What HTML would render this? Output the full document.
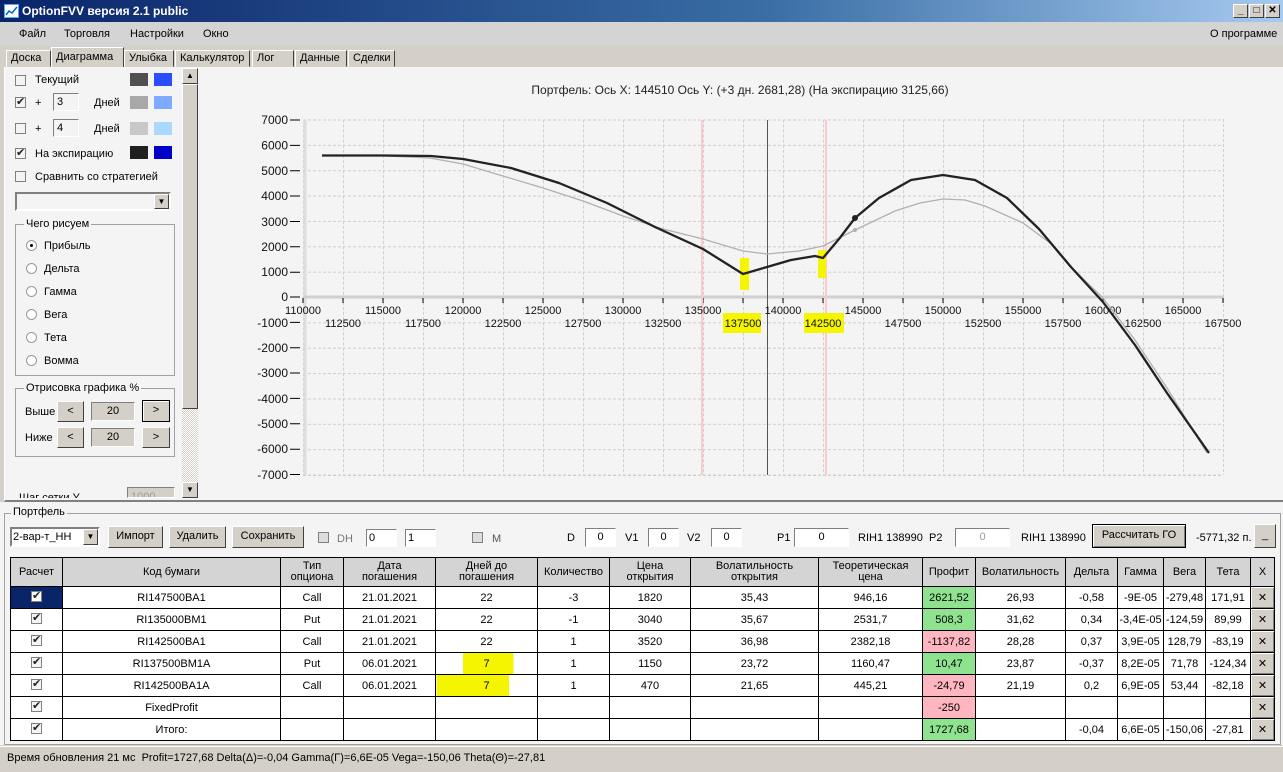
<!DOCTYPE html>
<html><head><meta charset="utf-8">
<style>
*{box-sizing:border-box;margin:0;padding:0}
body{width:1283px;height:772px;overflow:hidden;background:#d4d0c8;font-family:"Liberation Sans",sans-serif;font-size:11px;color:#000;position:relative}
.a{position:absolute}
.title{left:0;top:0;width:1283px;height:22px;background:linear-gradient(90deg,#0a246a 0%,#3a6ea5 60%,#a6caf0 100%);color:#fff;font-weight:bold;font-size:12px;line-height:22px;padding-left:22px}
.menu{left:0;top:22px;width:1283px;height:24px;background:#d4d4d4;font-size:11px}
.menu span{position:absolute;top:6px}
.tb{position:absolute;top:4px;width:15px;height:14px;background:#d4d0c8;border:1px solid;border-color:#fff #404040 #404040 #fff;color:#000;font-size:10px;line-height:11px;text-align:center;font-weight:bold}
.tab{position:absolute;top:50px;height:17px;background:#d4d0c8;border:1px solid;border-color:#fff #404040 #d4d0c8 #fff;font-size:11px;line-height:14px;padding:0 4px}
.cb{position:absolute;width:11px;height:11px;border:1px solid #808080;background:#f4f4f4}
.ck::after{content:"✔";position:absolute;left:0px;top:-3px;font-size:11px;color:#222}
.inp{position:absolute;border:1px solid;border-color:#808080 #fff #fff #808080;background:#f4f4f4}
.btn{position:absolute;background:#d4d0c8;border:1px solid;border-color:#fff #404040 #404040 #fff;text-align:center;font-size:11px}
.rad{position:absolute;width:11px;height:11px;border-radius:50%;border:1px solid #999;background:#fff}
.grp{position:absolute;border:1px solid #a0a0a0}
.grp b{position:absolute;top:-7px;left:8px;background:#f4f4f4;font-weight:normal;padding:0 2px}
table{position:absolute;left:10px;top:557px;border-collapse:collapse;table-layout:fixed;background:#fff;font-size:11px}
td{border:1px solid #000;height:22px;text-align:center;white-space:nowrap;overflow:hidden;padding:0}
tr.h td{background:#d4d4d4;height:29px;line-height:11px}
.g{background:#8fe38f}.p{background:#ffb6c1}
.x{background:#d4d0c8;border:1px solid #000;box-shadow:inset 1px 1px #fff,inset -1px -1px #808080}
</style></head><body>
<div class="a title">OptionFVV версия 2.1 public</div>
<div class="a" style="left:4px;top:4px;width:15px;height:14px;background:#fff;border:1px solid #5af"><svg width="13" height="12"><path d="M1 10L4 6L7 8L12 2" stroke="#06c" fill="none" stroke-width="1.5"/></svg></div>
<div class="tb" style="left:1233px">_</div><div class="tb" style="left:1249px">□</div><div class="tb" style="left:1266px;left:1265px">✕</div>
<div class="a menu"><span style="left:19px">Файл</span><span style="left:64px">Торговля</span><span style="left:130px">Настройки</span><span style="left:203px">Окно</span><span style="left:1210px">О программе</span></div>
<div class="a" style="left:0;top:46px;width:1283px;height:22px;background:#d4d0c8"></div>
<div class="tab" style="left:6px;width:45px">Доска</div>
<div class="tab" style="left:51px;top:47px;height:21px;width:73px;border-bottom:none;line-height:18px">Диаграмма</div>
<div class="tab" style="left:124px;width:50px">Улыбка</div>
<div class="tab" style="left:175px;width:75px">Калькулятор</div>
<div class="tab" style="left:252px;width:42px">Лог</div>
<div class="tab" style="left:295px;width:52px">Данные</div>
<div class="tab" style="left:348px;width:47px">Сделки</div>
<!-- main panel -->
<div class="a" style="left:4px;top:67px;width:1279px;height:435px;background:#f4f4f4;border-left:1px solid #fff;border-bottom:2px solid #808080"></div>
<!-- left options -->
<div class="cb" style="left:15px;top:75px"></div><div class="a" style="left:35px;top:74px">Текущий</div>
<div class="a" style="left:130px;top:73px;width:18px;height:13px;background:#505050"></div><div class="a" style="left:154px;top:73px;width:18px;height:13px;background:#2a4dff"></div>
<div class="cb ck" style="left:15px;top:97px"></div><div class="a" style="left:35px;top:97px">+</div><div class="inp" style="left:53px;top:93px;width:26px;height:18px;padding:2px 3px">3</div><div class="a" style="left:94px;top:97px">Дней</div>
<div class="a" style="left:130px;top:96px;width:18px;height:13px;background:#a8a8a8"></div><div class="a" style="left:154px;top:96px;width:18px;height:13px;background:#7eaaff"></div>
<div class="cb" style="left:15px;top:123px"></div><div class="a" style="left:35px;top:123px">+</div><div class="inp" style="left:53px;top:119px;width:26px;height:18px;padding:2px 3px">4</div><div class="a" style="left:94px;top:123px">Дней</div>
<div class="a" style="left:130px;top:122px;width:18px;height:13px;background:#c8c8c8"></div><div class="a" style="left:154px;top:122px;width:18px;height:13px;background:#aad8ff"></div>
<div class="cb ck" style="left:15px;top:148px"></div><div class="a" style="left:35px;top:148px">На экспирацию</div>
<div class="a" style="left:130px;top:146px;width:18px;height:13px;background:#202020"></div><div class="a" style="left:154px;top:146px;width:18px;height:13px;background:#0000c8"></div>
<div class="cb" style="left:15px;top:171px"></div><div class="a" style="left:35px;top:171px">Сравнить со стратегией</div>
<div class="inp" style="left:15px;top:192px;width:156px;height:19px;border:2px solid;border-color:#808080 #fff #fff #808080"><div class="btn" style="right:0;top:0;width:15px;height:15px;font-size:8px;line-height:13px">▼</div></div>
<div class="grp" style="left:15px;top:224px;width:160px;height:152px"><b>Чего рисуем</b></div>
<div class="rad" style="left:26px;top:240px"><div class="a" style="left:3px;top:3px;width:3px;height:3px;background:#000;border-radius:50%"></div></div><div class="a" style="left:44px;top:240px">Прибыль</div>
<div class="rad" style="left:26px;top:263px"></div><div class="a" style="left:44px;top:263px">Дельта</div>
<div class="rad" style="left:26px;top:286px"></div><div class="a" style="left:44px;top:286px">Гамма</div>
<div class="rad" style="left:26px;top:309px"></div><div class="a" style="left:44px;top:309px">Вега</div>
<div class="rad" style="left:26px;top:332px"></div><div class="a" style="left:44px;top:332px">Тета</div>
<div class="rad" style="left:26px;top:355px"></div><div class="a" style="left:44px;top:355px">Вомма</div>
<div class="grp" style="left:15px;top:388px;width:160px;height:69px"><b>Отрисовка графика %</b></div>
<div class="a" style="left:25px;top:406px">Выше</div>
<div class="btn" style="left:57px;top:401px;width:27px;height:21px;line-height:18px">&lt;</div>
<div class="inp" style="left:91px;top:402px;width:44px;height:19px;background:#d4d0c8;text-align:center;line-height:16px">20</div>
<div class="btn" style="left:142px;top:400px;width:28px;height:22px;line-height:19px;border:1px solid #000;box-shadow:inset 1px 1px #fff">&gt;</div>
<div class="a" style="left:25px;top:432px">Ниже</div>
<div class="btn" style="left:57px;top:427px;width:27px;height:21px;line-height:18px">&lt;</div>
<div class="inp" style="left:91px;top:428px;width:44px;height:19px;background:#d4d0c8;text-align:center;line-height:16px">20</div>
<div class="btn" style="left:142px;top:427px;width:28px;height:21px;line-height:18px">&gt;</div>
<div class="a" style="left:19px;top:489px;height:9px;overflow:hidden;line-height:18px">Шаг сетки Y</div>
<div class="inp" style="left:127px;top:487px;width:48px;height:11px;background:#d4d0c8;color:#999;overflow:hidden;line-height:18px;padding-left:3px">1000</div>
<!-- scrollbar -->
<div class="a" style="left:182px;top:68px;width:16px;height:430px;background:repeating-conic-gradient(#d4d0c8 0 25%,#fff 0 50%) 0 0/2px 2px"></div>
<div class="btn" style="left:182px;top:68px;width:16px;height:16px;font-size:8px;line-height:14px">▲</div>
<div class="btn" style="left:182px;top:84px;width:16px;height:325px"></div>
<div class="btn" style="left:182px;top:482px;width:16px;height:16px;font-size:8px;line-height:14px">▼</div>
<!-- chart -->
<svg class="a" style="left:0;top:0" width="1283" height="500" font-family="Liberation Sans,sans-serif" font-size="11">
<defs><pattern id="gr" patternUnits="userSpaceOnUse" x="303" y="119.5" width="40" height="25.36"><path d="M0 0.5H40M0.5 0V25.36" stroke="#cfcfcf" stroke-dasharray="3 2" fill="none"/></pattern></defs>
<rect x="303" y="119.5" width="920" height="355.5" fill="url(#gr)"/>
<line x1="1223.5" y1="119" x2="1223.5" y2="475" stroke="#cfcfcf" stroke-dasharray="3 2"/>
<line x1="303" y1="475.5" x2="1223" y2="475.5" stroke="#cfcfcf" stroke-dasharray="3 2"/>
<text x="740" y="94" text-anchor="middle" font-size="12" fill="#222">Портфель: Ось X: 144510 Ось Y:  (+3 дн. 2681,28)  (На экспирацию 3125,66)</text>
<line x1="305" y1="120" x2="305" y2="475" stroke="#ddd" stroke-width="3"/>
<line x1="303" y1="297" x2="1224" y2="297" stroke="#d0d0d0" stroke-width="3"/>
<g stroke="#000"><path d="M303 298v5M343 298v5M383 298v5M423 298v5M463 298v5M503 298v5M543 298v5M583 298v5M623 298v5M663 298v5M703 298v5M743 298v5M783 298v5M823 298v5M863 298v5M903 298v5M943 298v5M983 298v5M1023 298v5M1063 298v5M1103 298v5M1143 298v5M1183 298v5M1223 298v5"/>
<path d="M290 120h10M290 145.4h10M290 170.7h10M290 196h10M290 221.5h10M290 246.8h10M290 272.2h10M290 297h10M290 322.4h10M290 347.7h10M290 373h10M290 398.4h10M290 423.8h10M290 449.2h10M290 474.5h10"/></g>
<g text-anchor="end" font-size="12" fill="#111">
<text x="288" y="124">7000</text><text x="288" y="149.5">6000</text><text x="288" y="175">5000</text><text x="288" y="200">4000</text><text x="288" y="226">3000</text><text x="288" y="251">2000</text><text x="288" y="276">1000</text><text x="288" y="301">0</text><text x="288" y="327">-1000</text><text x="288" y="352">-2000</text><text x="288" y="377">-3000</text><text x="288" y="403">-4000</text><text x="288" y="428">-5000</text><text x="288" y="453">-6000</text><text x="288" y="479">-7000</text></g>
<rect x="701" y="120" width="2" height="355" fill="#ffc8cc"/><rect x="825" y="120" width="2" height="355" fill="#ffc8cc"/>
<line x1="767.5" y1="120" x2="767.5" y2="475" stroke="#555" stroke-width="1"/>
<rect x="740" y="258" width="9" height="32" fill="#f5f500"/><rect x="818" y="250" width="8" height="28" fill="#f5f500"/>
<rect x="723" y="313" width="38" height="20" fill="#f5f500"/><rect x="804" y="313" width="40" height="20" fill="#f5f500"/>
<g text-anchor="middle" fill="#111">
<text x="303" y="314">110000</text><text x="383" y="314">115000</text><text x="463" y="314">120000</text><text x="543" y="314">125000</text><text x="623" y="314">130000</text><text x="703" y="314">135000</text><text x="783" y="314">140000</text><text x="863" y="314">145000</text><text x="943" y="314">150000</text><text x="1023" y="314">155000</text><text x="1103" y="314">160000</text><text x="1183" y="314">165000</text>
<text x="343" y="327">112500</text><text x="423" y="327">117500</text><text x="503" y="327">122500</text><text x="583" y="327">127500</text><text x="663" y="327">132500</text><text x="743" y="327">137500</text><text x="823" y="327">142500</text><text x="903" y="327">147500</text><text x="983" y="327">152500</text><text x="1063" y="327">157500</text><text x="1143" y="327">162500</text><text x="1223" y="327">167500</text></g>
<polyline fill="none" stroke="#b0b0b0" stroke-width="1.3" points="322,155.5 383,155.8 430,158 463,164 503,176 543,188 583,201 623,216 663,229 703,239 743,251 767,254 799,251 823,246 855,230 895,211 920,203 943,199 965,200 985,206 1023,223 1050,243 1071,267 1103,298 1135,340 1167,388 1207,453"/>
<polyline fill="none" stroke="#222" stroke-width="2.3" stroke-linejoin="round" points="322,155.5 383,155.5 431,156 463,159 511,168 559,183 607,203 655,227 703,249 743,274 767,267 791,260 815,256 823,258 839,239 855,218 879,198 911,180 943,175 975,180 1007,198 1039,229 1071,267 1103,302 1135,345 1167,393 1209,453"/>
<circle cx="855" cy="218" r="3" fill="#222"/><circle cx="855" cy="230" r="2" fill="#b0b0b0"/>
</svg>
<!-- portfolio -->
<div class="a" style="left:0;top:502px;width:1283px;height:243px;background:#f4f4f4"></div>
<div class="grp" style="left:4px;top:513px;width:1277px;height:232px;border-color:#a0a0a0"><b style="top:-8px;left:6px">Портфель</b></div>
<div class="inp" style="left:10px;top:527px;width:90px;height:20px;background:#fff;border:2px solid;border-color:#808080 #fff #fff #808080;padding:2px 1px;font-size:11px">2-вар-т_НН<div class="btn" style="right:0;top:0;width:15px;height:16px;font-size:8px;line-height:14px">▼</div></div>
<div class="btn" style="left:108px;top:526px;width:55px;height:22px;line-height:19px">Импорт</div>
<div class="btn" style="left:169px;top:526px;width:57px;height:22px;line-height:19px">Удалить</div>
<div class="btn" style="left:232px;top:526px;width:72px;height:22px;line-height:19px">Сохранить</div>
<div class="cb" style="left:318px;top:532px;background:#ddd"></div><div class="a" style="left:337px;top:533px;color:#777">DH</div>
<div class="inp" style="left:366px;top:529px;width:31px;height:18px;background:#fff;padding:2px">0</div><div class="inp" style="left:405px;top:529px;width:31px;height:18px;background:#fff;padding:2px">1</div>
<div class="cb" style="left:472px;top:532px;background:#ddd"></div><div class="a" style="left:492px;top:533px;color:#555">M</div>
<div class="a" style="left:567px;top:532px">D</div><div class="inp" style="left:585px;top:528px;width:31px;height:19px;background:#fff;text-align:center;line-height:16px">0</div>
<div class="a" style="left:625px;top:532px">V1</div><div class="inp" style="left:648px;top:528px;width:31px;height:19px;background:#fff;text-align:center;line-height:16px">0</div>
<div class="a" style="left:687px;top:532px">V2</div><div class="inp" style="left:711px;top:528px;width:31px;height:19px;background:#fff;text-align:center;line-height:16px">0</div>
<div class="a" style="left:777px;top:532px">P1</div><div class="inp" style="left:794px;top:528px;width:55px;height:19px;background:#fff;text-align:center;line-height:16px">0</div>
<div class="a" style="left:858px;top:532px">RIH1 138990</div><div class="a" style="left:929px;top:532px">P2</div>
<div class="inp" style="left:955px;top:528px;width:55px;height:19px;background:#fff;text-align:center;line-height:16px;color:#999">0</div>
<div class="a" style="left:1021px;top:532px">RIH1 138990</div>
<div class="btn" style="left:1092px;top:524px;width:94px;height:24px;line-height:21px;border:1px solid #000;box-shadow:inset 1px 1px #fff,inset -1px -1px #808080">Рассчитать ГО</div>
<div class="a" style="left:1196px;top:532px">-5771,32 п.</div>
<div class="btn" style="left:1254px;top:524px;width:22px;height:24px;line-height:20px">_</div>
<table>
<colgroup><col style="width:52px"><col style="width:218px"><col style="width:63px"><col style="width:92px"><col style="width:102px"><col style="width:72px"><col style="width:81px"><col style="width:128px"><col style="width:104px"><col style="width:53px"><col style="width:90px"><col style="width:52px"><col style="width:46px"><col style="width:42px"><col style="width:45px"><col style="width:24px"></colgroup>
<tr class="h"><td>Расчет</td><td>Код бумаги</td><td>Тип<br>опциона</td><td>Дата<br>погашения</td><td>Дней до<br>погашения</td><td>Количество</td><td>Цена<br>открытия</td><td>Волатильность<br>открытия</td><td>Теоретическая<br>цена</td><td>Профит</td><td>Волатильность</td><td>Дельта</td><td>Гамма</td><td>Вега</td><td>Тета</td><td>X</td></tr>
<tr><td style="background:#0a246a"><span class="cb ck" style="position:relative;display:inline-block;background:#fff"></span></td><td>RI147500BA1</td><td>Call</td><td>21.01.2021</td><td>22</td><td>-3</td><td>1820</td><td>35,43</td><td>946,16</td><td class="g">2621,52</td><td>26,93</td><td>-0,58</td><td>-9E-05</td><td>-279,48</td><td>171,91</td><td class="x">✕</td></tr>
<tr><td><span class="cb ck" style="position:relative;display:inline-block"></span></td><td>RI135000BM1</td><td>Put</td><td>21.01.2021</td><td>22</td><td>-1</td><td>3040</td><td>35,67</td><td>2531,7</td><td class="g">508,3</td><td>31,62</td><td>0,34</td><td>-3,4E-05</td><td>-124,59</td><td>89,99</td><td class="x">✕</td></tr>
<tr><td><span class="cb ck" style="position:relative;display:inline-block"></span></td><td>RI142500BA1</td><td>Call</td><td>21.01.2021</td><td>22</td><td>1</td><td>3520</td><td>36,98</td><td>2382,18</td><td class="p">-1137,82</td><td>28,28</td><td>0,37</td><td>3,9E-05</td><td>128,79</td><td>-83,19</td><td class="x">✕</td></tr>
<tr><td><span class="cb ck" style="position:relative;display:inline-block"></span></td><td>RI137500BM1A</td><td>Put</td><td>06.01.2021</td><td style="background:linear-gradient(90deg,#fff 26%,#f5f500 26%,#f5f500 76%,#fff 76%)">7</td><td>1</td><td>1150</td><td>23,72</td><td>1160,47</td><td class="g">10,47</td><td>23,87</td><td>-0,37</td><td>8,2E-05</td><td>71,78</td><td>-124,34</td><td class="x">✕</td></tr>
<tr><td><span class="cb ck" style="position:relative;display:inline-block"></span></td><td>RI142500BA1A</td><td>Call</td><td>06.01.2021</td><td style="background:linear-gradient(90deg,#f5f500 72%,#fff 72%)">7</td><td>1</td><td>470</td><td>21,65</td><td>445,21</td><td class="p">-24,79</td><td>21,19</td><td>0,2</td><td>6,9E-05</td><td>53,44</td><td>-82,18</td><td class="x">✕</td></tr>
<tr><td><span class="cb ck" style="position:relative;display:inline-block"></span></td><td>FixedProfit</td><td></td><td></td><td></td><td></td><td></td><td></td><td></td><td class="p">-250</td><td></td><td></td><td></td><td></td><td></td><td class="x">✕</td></tr>
<tr><td><span class="cb ck" style="position:relative;display:inline-block"></span></td><td>Итого:</td><td></td><td></td><td></td><td></td><td></td><td></td><td></td><td class="g">1727,68</td><td></td><td>-0,04</td><td>6,6E-05</td><td>-150,06</td><td>-27,81</td><td class="x">✕</td></tr>
</table>
<div class="a" style="left:0;top:746px;width:1283px;height:26px;background:#d4d0c8;border-top:1px solid #fff;padding:5px 0 0 7px;font-size:11px">Время обновления 21 мс&nbsp; Profit=1727,68 Delta(Δ)=-0,04 Gamma(Γ)=6,6E-05 Vega=-150,06 Theta(Θ)=-27,81</div>
</body></html>
